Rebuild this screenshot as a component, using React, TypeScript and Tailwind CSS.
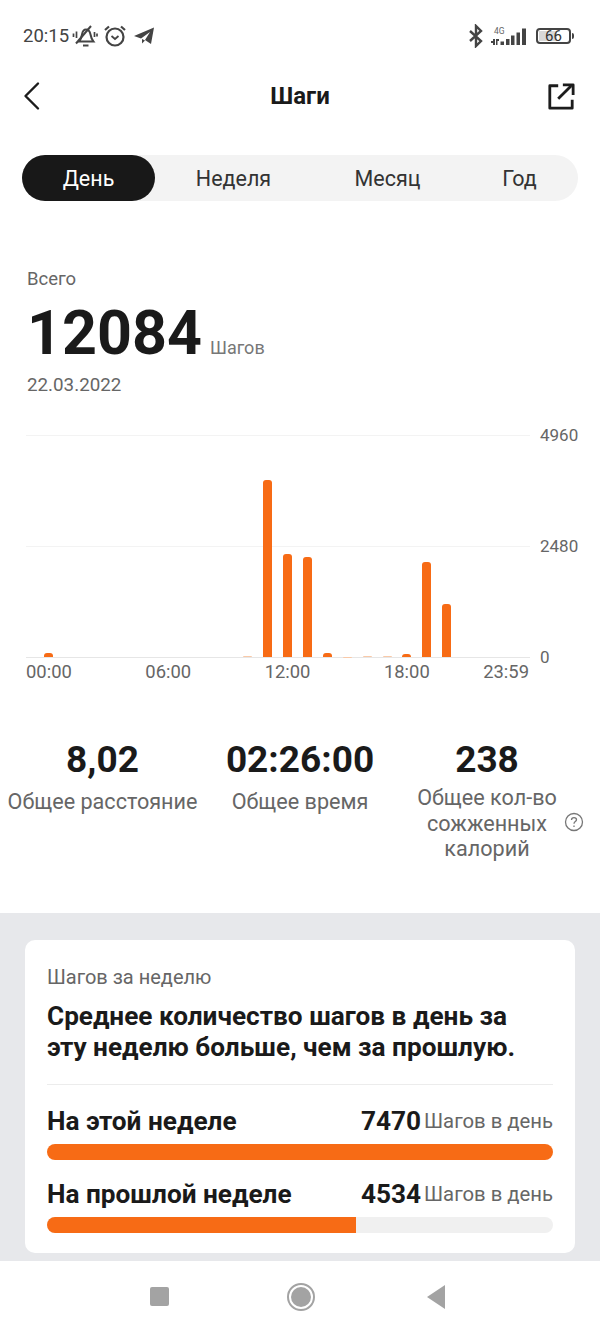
import React from 'react';

const bars = [4, 0, 0, 0, 0, 0, 0, 0, 0, 0, 1, 177, 103, 100, 4, 0.5, 1, 1, 3, 95, 53, 0, 0, 0];

function StatusBar() {
  return (
    <div className="flex h-[72px] items-center justify-between pl-[23px] pr-[26px] text-[#444]">
      <div className="flex items-center">
        <span className="text-[18.500px] leading-none">20:15</span>
        <svg width="26" height="24" viewBox="0 0 26 24" className="ml-[3px]" fill="none" stroke="#444" strokeWidth="2">
          <path d="M7 17.500c2-2 2.500-4 3-7 .5-3 2-5 4-5 3 0 4 2.500 4.500 5 .5 3 1.500 5 3 7H7Z" />
          <path d="M4 19.500 19 2" />
          <path d="M11 21.500h5.500" />
          <path d="M1.500 9.500v3.500M4.500 7.500v6.500M22.500 8v5M25 9.500v3" strokeWidth="1.700" />
        </svg>
        <svg width="24" height="24" viewBox="0 0 24 24" className="ml-[5px]" fill="none" stroke="#444" strokeWidth="2.200">
          <circle cx="12" cy="13" r="8.500" />
          <path d="m8.500 12 3.500 3 3.500-3" strokeWidth="1.800" />
          <path d="M2 6 6 2.500M22 6 18 2.500" />
        </svg>
        <svg width="22" height="20" viewBox="0 0 22 20" className="ml-[6px]" fill="#444">
          <path d="M1 10 21 1.500 18 18l-6-4 5-8-9 6.500Z" />
          <path d="m9 13 3 1.500-3 3Z" />
        </svg>
      </div>
      <div className="flex items-center">
        <svg width="16" height="24" viewBox="0 0 16 24" fill="none" stroke="#444" strokeWidth="2.400">
          <path d="M2 7 13 17 8 22V2l5 5L2 17" />
        </svg>
        <div className="relative ml-[7px] w-[36px]">
          <span className="absolute -top-[1px] left-[3px] text-[8.500px] leading-[8px] text-[#666]">4G</span>
          <svg width="36" height="17" viewBox="0 0 36 17" className="block" fill="#444">
            <path d="M0 13h2v2H0zM2 11h2v6H2zM5 11h1.500v6H5zM6.500 11H8v2H6.500z" />
            <rect x="9.500" y="13.500" width="3.500" height="3.500" />
            <rect x="15" y="11" width="3.500" height="6" />
            <rect x="20" y="7.500" width="3.500" height="9.500" />
            <rect x="25.500" y="4.500" width="3.500" height="12.500" />
            <rect x="31" y="0.500" width="4" height="16.500" />
          </svg>
        </div>
        <div className="ml-[9px] flex items-center">
          <div className="relative flex h-[16px] w-[35px] items-center justify-center rounded-[4px] border-2 border-[#444]">
            <div className="absolute inset-y-[1px] left-[1px] w-[18px] bg-[#d9d9d9]" />
            <span className="relative text-[15px] leading-none text-[#333]">66</span>
          </div>
          <div className="ml-[1px] h-[6px] w-[2px] rounded-r-sm bg-[#444]" />
        </div>
      </div>
    </div>
  );
}

function Header() {
  return (
    <div className="flex h-[48px] items-center justify-between px-[22px]">
      <svg width="32" height="30" viewBox="0 0 32 30" fill="none" stroke="#1c1c1c" strokeWidth="2.400" strokeLinecap="round" strokeLinejoin="round">
        <path d="M16 2.500 3.500 15 16 27.500" />
      </svg>
      <h1 className="text-[24px] leading-none font-bold text-[#1a1a1a]">Шаги</h1>
      <svg width="28" height="28" viewBox="0 0 30 30" className="mr-[3px] ml-[1px]" fill="none" stroke="#1c1c1c" strokeWidth="3" strokeLinejoin="round">
        <path d="M12 4H3v24h24v-9" />
        <path d="M12 18 26 4" />
        <path d="M17 3h11v11" />
      </svg>
    </div>
  );
}

function Chart() {
  return (
    <div className="mt-[39px] pl-[26px] pr-[21px]">
      <div className="relative h-[222px] w-full">
        <div className="flex h-full flex-col justify-between">
          {['4960', '2480', '0'].map((v) => (
            <div key={v} className="flex h-0 items-center">
              <div className={`h-px w-[504px] ${v === '0' ? 'bg-[#e6e6e6]' : 'bg-[#f3f3f3]'}`} />
              <span className={`ml-[10px] text-[17px] leading-none text-[#666] ${v === '0' ? 'mt-[1px]' : ''}`}>{v}</span>
            </div>
          ))}
        </div>
        <div className="absolute bottom-0 left-[13px] flex items-end">
          {bars.map((h, i) => (
            <div key={i} className="flex w-[19.9px] justify-center">
              {h > 0 && (
                <div
                  className={`w-[9px] rounded-t-[3px] ${h < 2 ? 'bg-[#f9c9a8]' : 'bg-[#f76b15]'}`}
                  style={{ height: h }}
                />
              )}
            </div>
          ))}
        </div>
      </div>
      <div className="mt-[5px] flex w-[503px] justify-between text-[18.400px] leading-[20px] text-[#666]">
        <div className="flex gap-[73.500px]">
          <span>00:00</span>
          <span>06:00</span>
          <span>12:00</span>
          <span>18:00</span>
        </div>
        <span>23:59</span>
      </div>
    </div>
  );
}

function Stats() {
  return (
    <div className="mt-[57px] flex h-[174px] items-start text-center">
      <div className="ml-[3px] w-[199px]">
        <div className="text-[37px] leading-[42px] font-bold text-[#1a1a1a]">8,02</div>
        <div className="mt-[8px] text-[21.600px] leading-[25px] text-[#666]">Общее расстояние</div>
      </div>
      <div className="ml-[23px] w-[150px]">
        <div className="text-[37px] leading-[42px] font-bold text-[#1a1a1a]">02:26:00</div>
        <div className="mt-[8px] text-[21.600px] leading-[25px] text-[#666]">Общее время</div>
      </div>
      <div className="ml-[37px] w-[150px]">
        <div className="text-[37px] leading-[42px] font-bold text-[#1a1a1a]">238</div>
        <div className="relative mt-[4px] text-[21.600px] leading-[25.500px] text-[#666]">
          Общее кол-во сожженных калорий
          <svg width="20" height="20" viewBox="0 0 20 20" className="absolute top-[27px] -right-[22px]" fill="none" stroke="#777" strokeWidth="1.300">
            <circle cx="10" cy="10" r="8.500" />
            <path d="M7.500 8c0-1.500 1-2.400 2.500-2.400s2.500 1 2.500 2.200c0 1.800-2.500 1.800-2.500 3.900" />
            <path d="M10 13.500v1.500" />
          </svg>
        </div>
      </div>
    </div>
  );
}

function Compare({ label, value, pct }: { label: string; value: string; pct: string }) {
  return (
    <div>
      <div className="flex items-center justify-between">
        <span className="text-[26.200px] leading-[32px] font-bold text-[#1a1a1a]">{label}</span>
        <span className="flex items-center">
          <span className="text-[26.200px] leading-[32px] font-bold text-[#1a1a1a]">{value}</span>
          <span className="ml-[3px] text-[20.300px] leading-[32px] text-[#666]">Шагов в день</span>
        </span>
      </div>
      <div className="mt-[7px] h-[16px] overflow-hidden rounded-full bg-[#f0f0f0]">
        <div className={`h-full bg-[#f76b15] ${pct}`} />
      </div>
    </div>
  );
}

export default function App() {
  return (
    <div className="flex h-[1332px] w-[600px] flex-col overflow-hidden bg-white font-['Roboto',sans-serif]">
      <StatusBar />
      <Header />
      <div className="mx-[22px] mt-[35px] flex h-[46px] items-center rounded-full bg-[#f3f3f3] text-[21.500px] text-[#333]">
        <div className="flex h-full w-[133px] items-center justify-center rounded-full bg-[#181818] pt-[3px] text-white">День</div>
        <div className="w-[157px] pt-[3px] text-center">Неделя</div>
        <div className="w-[151px] pt-[3px] text-center">Месяц</div>
        <div className="w-[113px] pt-[3px] text-center">Год</div>
      </div>

      <div className="mt-[67px] pl-[27px]">
        <div className="text-[18.500px] leading-[22px] text-[#666]">Всего</div>
        <div className="mt-[8px] flex items-baseline">
          <span className="text-[61px] leading-[70px] font-bold text-[#1a1a1a]">12084</span>
          <span className="ml-[8px] text-[18px] text-[#777]">Шагов</span>
        </div>
        <div className="mt-[6px] text-[18.800px] leading-[22px] text-[#666]">22.03.2022</div>
      </div>

      <Chart />
      <Stats />

      <div className="flex-1 bg-[#e7e8eb] px-[25px] pt-[27px]">
        <div className="h-[313px] rounded-[10px] bg-white px-[22px] pt-[24px]">
          <div className="text-[20px] leading-[26px] text-[#666]">Шагов за неделю</div>
          <p className="mt-[11px] text-[26.200px] leading-[31px] font-bold text-[#1a1a1a]">
            Среднее количество шагов в день за
            <br />
            эту неделю больше, чем за прошлую.
          </p>
          <div className="mt-[21px] mb-[20px] h-px bg-[#ececec]" />
          <div className="flex flex-col gap-[18px]">
            <Compare label="На этой неделе" value="7470" pct="w-full" />
            <Compare label="На прошлой неделе" value="4534" pct="w-[61%]" />
          </div>
        </div>
      </div>

      <div className="flex h-[71px] items-center bg-white pl-[150px]">
        <div className="h-[19px] w-[19px] rounded-[2px] bg-[#a3a3a3]" />
        <div className="ml-[118px] flex h-[28px] w-[28px] items-center justify-center rounded-full border-2 border-[#a3a3a3]">
          <div className="h-[20px] w-[20px] rounded-full bg-[#a3a3a3]" />
        </div>
        <svg width="19" height="24" viewBox="0 0 19 24" className="ml-[112px]" fill="#a3a3a3">
          <path d="M18 0v24L0 12Z" />
        </svg>
      </div>
    </div>
  );
}
